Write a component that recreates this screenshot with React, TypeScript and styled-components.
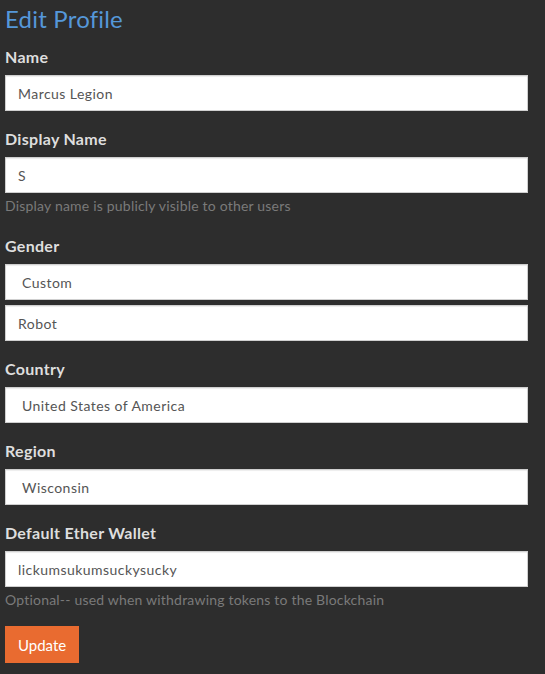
import React from 'react';
import styled, { createGlobalStyle } from 'styled-components';

const GlobalStyle = createGlobalStyle`
    html, body {
        margin: 0;
        padding: 0;
        background: #2d2d2d;
    }
    body {
        font-family: Lato, "Open Sans", sans-serif;
    }
`;

const Page = styled.div`
    padding: 0 17px 12px 5px;
    background: #2d2d2d;
    min-height: 674px;
    box-sizing: border-box;
`;

const Title = styled.h2`
    margin: 0;
    padding-top: 4px;
    font-size: 24px;
    line-height: 30px;
    font-weight: 400;
    letter-spacing: 0.2px;
    color: #5597d9;
`;

const Group = styled.div`
    margin-top: 12px;
    & + & {
        margin-top: 17px;
    }
`;

const Label = styled.label`
    display: block;
    font-size: 16px;
    line-height: 22px;
    font-weight: 700;
    letter-spacing: 0.3px;
    color: #dedede;
    margin-bottom: 7px;
`;

const TextInput = styled.input`
    display: block;
    width: 100%;
    height: 36px;
    box-sizing: border-box;
    padding: 0 12px;
    border: 1px solid #cfcfcf;
    border-radius: 0;
    background: #fff;
    box-shadow: inset 0 1px 1px rgba(0, 0, 0, 0.075);
    font-family: Lato, "Open Sans", sans-serif;
    font-size: 14px;
    letter-spacing: 0.45px;
    color: #555;
    outline: none;
    & + & {
        margin-top: 5px;
    }
`;

const Select = styled.select`
    display: block;
    width: 100%;
    height: 36px;
    box-sizing: border-box;
    padding: 0 16px;
    border: 1px solid #cfcfcf;
    border-radius: 0;
    background: #fff;
    box-shadow: inset 0 1px 1px rgba(0, 0, 0, 0.075);
    appearance: none;
    font-family: Lato, "Open Sans", sans-serif;
    font-size: 14px;
    letter-spacing: 0.45px;
    color: #555;
    outline: none;
    & + input {
        margin-top: 5px;
    }
`;

const Help = styled.div`
    margin-top: 3px;
    padding-bottom: 2px;
    font-size: 14px;
    line-height: 20px;
    letter-spacing: 0.2px;
    color: #7a7a7a;
`;

const UpdateButton = styled.button`
    margin-top: 14px;
    height: 37px;
    padding: 0 13px;
    border: none;
    border-radius: 0;
    background: #e96b30;
    color: #fff;
    font-family: Lato, "Open Sans", sans-serif;
    font-size: 15px;
    cursor: pointer;
`;

function App() {
    return (
        <Page>
            <GlobalStyle />
            <Title>Edit Profile</Title>
            <Group>
                <Label>Name</Label>
                <TextInput defaultValue="Marcus Legion" />
            </Group>
            <Group>
                <Label>Display Name</Label>
                <TextInput defaultValue="S" />
                <Help>Display name is publicly visible to other users</Help>
            </Group>
            <Group>
                <Label>Gender</Label>
                <Select defaultValue="custom">
                    <option value="custom">Custom</option>
                </Select>
                <TextInput defaultValue="Robot" />
            </Group>
            <Group>
                <Label>Country</Label>
                <Select defaultValue="us">
                    <option value="us">United States of America</option>
                </Select>
            </Group>
            <Group>
                <Label>Region</Label>
                <Select defaultValue="wi">
                    <option value="wi">Wisconsin</option>
                </Select>
            </Group>
            <Group>
                <Label>Default Ether Wallet</Label>
                <TextInput defaultValue="lickumsukumsuckysucky" />
                <Help>Optional-- used when withdrawing tokens to the Blockchain</Help>
            </Group>
            <UpdateButton>Update</UpdateButton>
        </Page>
    );
}

export default App;
